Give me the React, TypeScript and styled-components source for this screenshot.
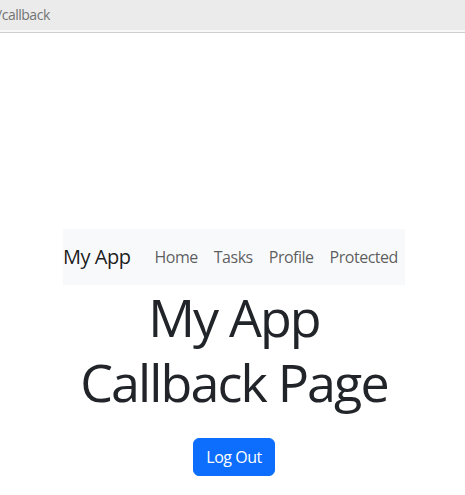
import React from "react";
import styled, { createGlobalStyle } from "styled-components";

const GlobalStyle = createGlobalStyle`
  html, body {
    margin: 0;
    padding: 0;
    background: #ffffff;
  }
  body {
    font-family: "Segoe UI", "Open Sans", "Noto Sans", "Liberation Sans", sans-serif;
    color: #212529;
    letter-spacing: -0.03em;
  }
  * { box-sizing: border-box; }
`;

const Chrome = styled.header`
  display: flex;
  flex-direction: column;
`;

const AddressBar = styled.div`
  height: 30px;
  background: #ebebeb;
  display: flex;
  align-items: center;
  overflow: hidden;
`;

const Url = styled.span`
  margin-left: -3px;
  font-size: 14px;
  color: #737373;
  line-height: 1;
  white-space: nowrap;
`;

const Strip = styled.div`
  height: 3px;
  background: #f7f7f8;
  border-bottom: 1px solid #cfcfcf;
`;

const Main = styled.main`
  display: flex;
  justify-content: center;
  padding: 196px 0 0 3px;
`;

const Column = styled.div`
  width: 342px;
  display: flex;
  flex-direction: column;
  align-items: center;
  text-align: center;
`;

const Navbar = styled.nav`
  align-self: stretch;
  display: flex;
  align-items: center;
  padding: 8px 0;
  background: #f8f9fa;
`;

const Brand = styled.a`
  font-size: 20px;
  line-height: 30px;
  padding: 5px 0;
  margin-right: 16px;
  color: rgba(0, 0, 0, 0.9);
  text-decoration: none;
  white-space: nowrap;
`;

const NavList = styled.div`
  display: flex;
  align-items: center;
`;

const NavLink = styled.a`
  font-size: 16px;
  line-height: 24px;
  padding: 8px;
  color: rgba(0, 0, 0, 0.65);
  text-decoration: none;
  white-space: nowrap;
`;

const Title = styled.h1`
  margin: 0;
  font-size: 52px;
  line-height: 64.5px;
  font-weight: 400;
  letter-spacing: -0.036em;
  color: #212529;
`;

const LogoutButton = styled.button`
  margin-top: 24px;
  font-family: inherit;
  letter-spacing: inherit;
  font-size: 16px;
  line-height: 24px;
  padding: 6px 12px;
  border: 1px solid #0d6efd;
  border-radius: 6px;
  background: #0d6efd;
  color: #ffffff;
  cursor: pointer;
`;

const links = ["Home", "Tasks", "Profile", "Protected"];

export default function App() {
  return (
    <>
      <GlobalStyle />
      <Chrome>
        <AddressBar>
          <Url>/callback</Url>
        </AddressBar>
        <Strip />
      </Chrome>
      <Main>
        <Column>
          <Navbar>
            <Brand href="#">My App</Brand>
            <NavList>
              {links.map((l) => (
                <NavLink key={l} href="#">
                  {l}
                </NavLink>
              ))}
            </NavList>
          </Navbar>
          <Title>My App Callback Page</Title>
          <LogoutButton>Log Out</LogoutButton>
        </Column>
      </Main>
    </>
  );
}
